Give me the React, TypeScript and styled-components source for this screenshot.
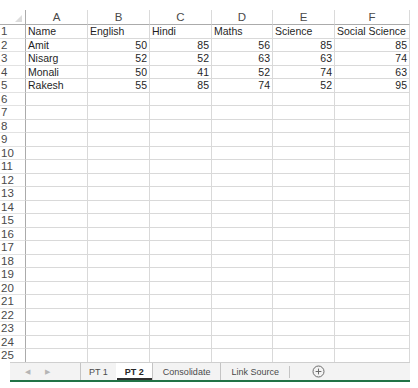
import React from 'react';
import styled, { createGlobalStyle } from 'styled-components';

const GlobalStyle = createGlobalStyle`
  html, body {
    margin: 0;
    padding: 0;
    background: #ffffff;
    font-family: "Liberation Sans", Arial, sans-serif;
  }
`;

const COLS = [26, 62, 62, 62, 61, 62, 75];
const ROW_COUNT = 25;

const headers = ['A', 'B', 'C', 'D', 'E', 'F'];

const data: (string | number)[][] = [
  ['Name', 'English', 'Hindi', 'Maths', 'Science', 'Social Science'],
  ['Amit', 50, 85, 56, 85, 85],
  ['Nisarg', 52, 52, 63, 63, 74],
  ['Monali', 50, 41, 52, 74, 63],
  ['Rakesh', 55, 85, 74, 52, 95],
];

const Page = styled.div`
  width: 418px;
  height: 388px;
  display: flex;
  flex-direction: column;
  overflow: hidden;
`;

const Sheet = styled.div`
  margin-top: 10px;
  height: 352px;
  overflow: hidden;
  display: grid;
  grid-template-columns: ${COLS.map((c) => `${c}px`).join(' ')};
  grid-template-rows: 15px repeat(${ROW_COUNT}, 13.5px);
  align-content: start;
`;

const Corner = styled.div`
  position: relative;
  border-bottom: 1px solid #ababab;
  border-right: 1px solid #ababab;
  box-sizing: border-box;
  &::after {
    content: '';
    position: absolute;
    right: 3px;
    bottom: 2px;
    width: 0;
    height: 0;
    border-left: 7px solid transparent;
    border-bottom: 7px solid #dcdcdc;
  }
`;

const ColHeader = styled.div`
  box-sizing: border-box;
  border-bottom: 1px solid #ababab;
  border-right: 1px solid #dadada;
  display: flex;
  align-items: flex-end;
  justify-content: center;
  font-size: 11.5px;
  line-height: 13px;
  color: #4a4a4a;
`;

const RowHeader = styled.div`
  box-sizing: border-box;
  border-right: 1px solid #ababab;
  border-bottom: 1px solid #e2e2e2;
  display: flex;
  align-items: flex-end;
  padding-left: 1px;
  font-size: 11.5px;
  line-height: 12.5px;
  color: #4a4a4a;
`;

const Cell = styled.div<{ $numeric?: boolean }>`
  box-sizing: border-box;
  border-right: 1px solid #d9d9d9;
  border-bottom: 1px solid #d9d9d9;
  display: flex;
  align-items: flex-end;
  justify-content: ${({ $numeric }) => ($numeric ? 'flex-end' : 'flex-start')};
  padding: 0 2px;
  font-size: 10.5px;
  line-height: 12.5px;
  color: #1f1f1f;
  white-space: nowrap;
  overflow: hidden;
`;

const TabBar = styled.div`
  margin-left: 10px;
  width: 400px;
  height: 20px;
  box-sizing: border-box;
  background: #f3f3f3;
  border-top: 1px solid #cfcfcf;
  border-bottom: 2px solid #217346;
  display: flex;
  align-items: stretch;
  font-size: 9px;
  color: #444;
`;

const Nav = styled.div`
  width: 70px;
  display: flex;
  align-items: center;
  gap: 15px;
  padding-left: 15px;
  box-sizing: border-box;
  color: #b5b5b5;
  font-size: 7px;
`;

const Tab = styled.div<{ $active?: boolean; $pad: number }>`
  position: relative;
  display: flex;
  align-items: center;
  padding: 0 ${({ $pad }) => $pad}px;
  border-left: 1px solid ${({ $active }) => ($active ? 'transparent' : '#c4c4c4')};
  background: ${({ $active }) => ($active ? '#ffffff' : 'transparent')};
  font-weight: ${({ $active }) => ($active ? 700 : 400)};
  color: ${({ $active }) => ($active ? '#262626' : '#4a4a4a')};
  ${({ $active }) =>
    $active &&
    `
    &::after {
      content: '';
      position: absolute;
      left: 0;
      right: 0;
      bottom: 0;
      height: 2px;
      background: #2f2f2f;
    }
  `}
`;

const TabSep = styled.div`
  width: 0;
  border-left: 1px solid #c4c4c4;
  margin: 3px 0 2px;
`;

const AddButton = styled.div`
  display: flex;
  align-items: center;
  margin-left: 22px;
`;

function PlusIcon() {
  return (
    <svg width="13" height="13" viewBox="0 0 13 13">
      <circle cx="6.5" cy="6.5" r="5.5" fill="none" stroke="#6b6b6b" strokeWidth="1" />
      <path d="M6.5 3.6v5.8M3.6 6.5h5.8" stroke="#6b6b6b" strokeWidth="1" />
    </svg>
  );
}

export default function App() {
  const rows = Array.from({ length: ROW_COUNT }, (_, i) => i);
  return (
    <Page>
      <GlobalStyle />
      <Sheet>
        <Corner />
        {headers.map((h) => (
          <ColHeader key={h}>{h}</ColHeader>
        ))}
        {rows.map((r) => (
          <React.Fragment key={r}>
            <RowHeader>{r + 1}</RowHeader>
            {headers.map((h, c) => {
              const v = data[r]?.[c];
              return (
                <Cell key={h} $numeric={typeof v === 'number'}>
                  {v ?? ''}
                </Cell>
              );
            })}
          </React.Fragment>
        ))}
      </Sheet>
      <TabBar>
        <Nav>
          <span>◀</span>
          <span>▶</span>
        </Nav>
        <Tab $pad={8}>PT 1</Tab>
        <Tab $active $pad={8}>PT 2</Tab>
        <Tab $pad={10}>Consolidate</Tab>
        <Tab $pad={10}>Link Source</Tab>
        <TabSep />
        <AddButton>
          <PlusIcon />
        </AddButton>
      </TabBar>
    </Page>
  );
}
